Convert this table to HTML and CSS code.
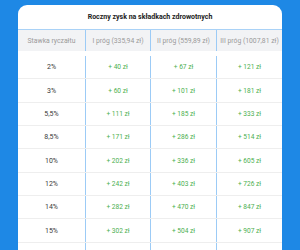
FILE: index.html
```html
<!DOCTYPE html>
<html lang="pl">
<head>
<meta charset="utf-8">
<link rel="stylesheet" href="styles.css">
</head>
<body>
<div class="card">
  <div class="title">Roczny zysk na składkach zdrowotnych</div>
  <div class="grid">
    <div class="row head">
      <div class="cell">Stawka ryczałtu</div>
      <div class="cell">I próg (335,94 zł)</div>
      <div class="cell">II próg (559,89 zł)</div>
      <div class="cell">III próg (1007,81 zł)</div>
    </div>
    <div class="row first">
      <div class="cell rate">2%</div>
      <div class="cell val">+ 40 zł</div>
      <div class="cell val">+ 67 zł</div>
      <div class="cell val">+ 121 zł</div>
    </div>
    <div class="row">
      <div class="cell rate">3%</div>
      <div class="cell val">+ 60 zł</div>
      <div class="cell val">+ 101 zł</div>
      <div class="cell val">+ 181 zł</div>
    </div>
    <div class="row">
      <div class="cell rate">5,5%</div>
      <div class="cell val">+ 111 zł</div>
      <div class="cell val">+ 185 zł</div>
      <div class="cell val">+ 333 zł</div>
    </div>
    <div class="row">
      <div class="cell rate">8,5%</div>
      <div class="cell val">+ 171 zł</div>
      <div class="cell val">+ 286 zł</div>
      <div class="cell val">+ 514 zł</div>
    </div>
    <div class="row">
      <div class="cell rate">10%</div>
      <div class="cell val">+ 202 zł</div>
      <div class="cell val">+ 336 zł</div>
      <div class="cell val">+ 605 zł</div>
    </div>
    <div class="row">
      <div class="cell rate">12%</div>
      <div class="cell val">+ 242 zł</div>
      <div class="cell val">+ 403 zł</div>
      <div class="cell val">+ 726 zł</div>
    </div>
    <div class="row">
      <div class="cell rate">14%</div>
      <div class="cell val">+ 282 zł</div>
      <div class="cell val">+ 470 zł</div>
      <div class="cell val">+ 847 zł</div>
    </div>
    <div class="row">
      <div class="cell rate">15%</div>
      <div class="cell val">+ 302 zł</div>
      <div class="cell val">+ 504 zł</div>
      <div class="cell val">+ 907 zł</div>
    </div>
    <div class="row empty">
      <div class="cell"></div>
      <div class="cell"></div>
      <div class="cell"></div>
      <div class="cell"></div>
    </div>
  </div>
</div>
</body>
</html>
```
FILE: styles.css
```css
html, body {
  margin: 0;
  padding: 0;
  background: #1e88e5;
  overflow: hidden;
}
body {
  font-family: Roboto, "Liberation Sans", sans-serif;
  padding: 5px 18px 0 18px;
}
.card {
  background: #ffffff;
  border-radius: 9px 9px 0 0;
  overflow: hidden;
}
.title {
  height: 24px;
  display: flex;
  align-items: center;
  justify-content: center;
  font-size: 7px;
  font-weight: 700;
  color: #222222;
  border-bottom: 1px solid #a9d2f7;
}
.row {
  display: grid;
  grid-template-columns: 67px 65px 66px 1fr;
  height: 23.35px;
  border-bottom: 1px solid #eeeeee;
  box-sizing: border-box;
}
.row.head {
  height: 21px;
  background: #f2f3f5;
  border-bottom: none;
}
.row.first {
  height: 28.35px;
  padding-top: 5px;
}
.row.empty {
  border-bottom: none;
}
.cell {
  display: flex;
  align-items: center;
  justify-content: center;
  font-size: 7px;
  white-space: nowrap;
}
.cell + .cell {
  border-left: 1px solid #9ccbf6;
}
.head .cell {
  color: #9a9a9a;
  font-size: 6.8px;
}
.rate {
  color: #3a3a3a;
}
.val {
  color: #4caf50;
  font-size: 6.6px;
}
```
